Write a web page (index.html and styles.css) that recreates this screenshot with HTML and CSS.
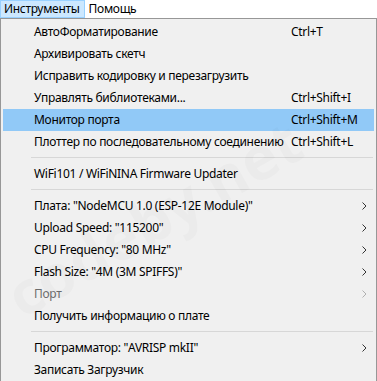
FILE: index.html
```html
<!DOCTYPE html>
<html lang="ru">
<head>
    <meta charset="UTF-8">
    <title>Инструменты</title>
    <link rel="stylesheet" href="styles.css">
</head>
<body>
    <div class="menubar">
        <span class="menubar-item active">Инструменты</span>
        <span class="menubar-item">Помощь</span>
    </div>
    <div class="menu">
        <div class="item"><span class="label">АвтоФорматирование</span><span class="keys">Ctrl+T</span></div>
        <div class="item"><span class="label">Архивировать скетч</span></div>
        <div class="item"><span class="label">Исправить кодировку и перезагрузить</span></div>
        <div class="item"><span class="label">Управлять библиотеками...</span><span class="keys">Ctrl+Shift+I</span></div>
        <div class="item selected"><span class="label">Монитор порта</span><span class="keys">Ctrl+Shift+M</span></div>
        <div class="item"><span class="label">Плоттер по последовательному соединению</span><span class="keys">Ctrl+Shift+L</span></div>
        <div class="separator"></div>
        <div class="item"><span class="label">WiFi101 / WiFiNINA Firmware Updater</span></div>
        <div class="separator"></div>
        <div class="item"><span class="label">Плата: "NodeMCU 1.0 (ESP-12E Module)"</span><span class="arrow"><svg width="5" height="8" viewBox="0 0 5 8"><path d="M0.5 0.5 L4 4 L0.5 7.5" /></svg></span></div>
        <div class="item"><span class="label">Upload Speed: "115200"</span><span class="arrow"><svg width="5" height="8" viewBox="0 0 5 8"><path d="M0.5 0.5 L4 4 L0.5 7.5" /></svg></span></div>
        <div class="item"><span class="label">CPU Frequency: "80 MHz"</span><span class="arrow"><svg width="5" height="8" viewBox="0 0 5 8"><path d="M0.5 0.5 L4 4 L0.5 7.5" /></svg></span></div>
        <div class="item"><span class="label">Flash Size: "4M (3M SPIFFS)"</span><span class="arrow"><svg width="5" height="8" viewBox="0 0 5 8"><path d="M0.5 0.5 L4 4 L0.5 7.5" /></svg></span></div>
        <div class="item disabled"><span class="label">Порт</span><span class="arrow"><svg width="5" height="8" viewBox="0 0 5 8"><path d="M0.5 0.5 L4 4 L0.5 7.5" /></svg></span></div>
        <div class="item"><span class="label">Получить информацию о плате</span></div>
        <div class="separator"></div>
        <div class="item"><span class="label">Программатор: "AVRISP mkII"</span><span class="arrow"><svg width="5" height="8" viewBox="0 0 5 8"><path d="M0.5 0.5 L4 4 L0.5 7.5" /></svg></span></div>
        <div class="item"><span class="label">Записать Загрузчик</span></div>
        <div class="watermark">codeby.net</div>
    </div>
</body>
</html>
```

FILE: styles.css
```css
body {
    margin: 0;
    padding: 0;
    background-color: #ffffff;
    font-family: "Noto Sans", "Liberation Sans", sans-serif;
    font-size: 12px;
    letter-spacing: -0.3px;
    color: #000000;
}
.menubar {
    display: flex;
    height: 18px;
    background-color: #ffffff;
}
.menubar-item {
    padding: 0 4px 0 3px;
    line-height: 16px;
    border: 1px solid transparent;
}
.menubar-item.active {
    background-color: #cce8ff;
    border-color: #99d1ff;
}
.menu {
    position: relative;
    overflow: hidden;
    background-color: #f0f0f0;
    border: 1px solid #979797;
    border-bottom: none;
    padding: 2px;
}
.item {
    display: grid;
    grid-template-columns: 31px 257px 1fr 12px;
    height: 22px;
    line-height: 22px;
    white-space: nowrap;
}
.item .label {
    grid-column: 2;
}
.item .keys {
    grid-column: 3;
}
.item .arrow {
    grid-column: 4;
    display: flex;
    align-items: center;
}
.arrow path {
    fill: none;
    stroke: #333333;
    stroke-width: 1;
}
.item.selected {
    background-color: #91c9f7;
}
.item.disabled {
    color: #6d6d6d;
}
.item.disabled .arrow path {
    stroke: #b0b0b0;
}
.separator {
    height: 1px;
    margin: 4px 1px 5px 28px;
    background-color: #d7d7d7;
}
.watermark {
    position: absolute;
    left: 10px;
    top: 240px;
    font-size: 60px;
    font-weight: bold;
    letter-spacing: 0;
    color: rgba(0, 0, 0, 0.02);
    transform: rotate(-30deg);
    transform-origin: left center;
    pointer-events: none;
    white-space: nowrap;
}
```
